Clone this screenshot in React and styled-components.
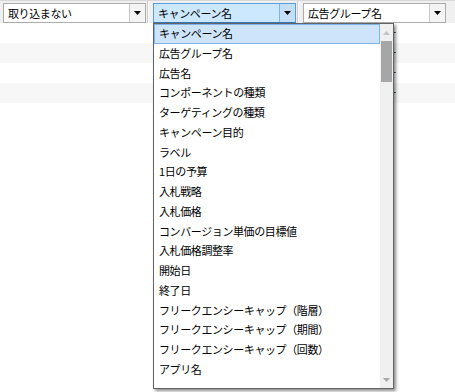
import React from 'react';
import styled, { createGlobalStyle } from 'styled-components';

const Global = createGlobalStyle`
  html, body { margin: 0; padding: 0; background: #fff; }
  body { font-family: "Noto Sans CJK JP", "Noto Sans", sans-serif; color: #000; }
`;

const Page = styled.div`
  position: relative;
  width: 455px;
  height: 392px;
  overflow: hidden;
  background: #fff;
`;

const Toolbar = styled.div`
  display: flex;
  align-items: flex-start;
  height: 23px;
  box-sizing: border-box;
  padding-left: 3px;
  background: #f0f0f0;
  border-top: 1px solid #d8d8d8;
`;

const Select = styled.div`
  display: flex;
  box-sizing: border-box;
  width: 143px;
  height: 20px;
  margin-top: 2px;
  border: 1px solid ${(p) => (p.$active ? '#5a9bd8' : '#acacac')};
  border-bottom-color: ${(p) => (p.$active ? '#3a78b8' : '#acacac')};
  background: ${(p) => (p.$active ? '#cce8ff' : '#fff')};
`;

const SelectText = styled.div`
  flex: 1;
  padding-left: 4px;
  font-size: 11px;
  letter-spacing: -0.4px;
  line-height: 18px;
  white-space: nowrap;
  overflow: hidden;
`;

const SelectButton = styled.div`
  width: 15px;
  display: flex;
  align-items: center;
  justify-content: center;
  border-left: 1px solid ${(p) => (p.$active ? '#7eb4ea' : '#c8c8c8')};
  background: ${(p) => (p.$active ? '#c4def5' : '#f4f4f4')};
`;

const Divider = styled.div`
  width: 7px;
  height: 22px;
  display: flex;
  padding-left: 1px;
  box-sizing: border-box;
  &::before {
    content: "";
    width: 1px;
    background: #cbcbcb;
  }
  &::after {
    content: "";
    width: 1px;
    background: #fbfbfb;
  }
`;

const Rows = styled.div`
  display: flex;
  flex-direction: column;
`;

const Row = styled.div`
  display: flex;
  height: 20px;
  background: ${(p) => (p.$alt ? '#f7f7f7' : '#fff')};
`;

const Peek = styled.div`
  margin-left: 388px;
  width: 9px;
  overflow: hidden;
  display: flex;
  justify-content: flex-end;
  font-size: 12px;
  line-height: 20px;
  & > span { flex: none; }
`;

const Dropdown = styled.div`
  position: absolute;
  left: 153px;
  top: 23px;
  width: 241px;
  height: 366px;
  box-sizing: border-box;
  border: 1px solid #646464;
  background: #fff;
  display: flex;
  box-shadow: 2px 2px 3px rgba(0, 0, 0, 0.45);
`;

const List = styled.div`
  flex: 1;
  display: flex;
  flex-direction: column;
  overflow: hidden;
`;

const Item = styled.div`
  flex: none;
  height: 19.75px;
  box-sizing: border-box;
  padding-left: 4px;
  border: 1px solid ${(p) => (p.$selected ? '#7eb4ea' : 'transparent')};
  background: ${(p) => (p.$selected ? '#cde4fa' : 'transparent')};
  font-size: 11px;
  letter-spacing: -0.4px;
  line-height: 16.5px;
  white-space: nowrap;
`;

const Scrollbar = styled.div`
  width: 13px;
  display: flex;
  flex-direction: column;
  background: #f0f0f0;
`;

const ScrollArrow = styled.div`
  height: 17px;
  display: flex;
  align-items: center;
  justify-content: center;
`;

const Thumb = styled.div`
  height: 41px;
  margin: 0 1px;
  background: #a6a6a6;
`;

const Spacer = styled.div`
  flex: 1;
`;

const Arrow = () => (
  <svg width="7" height="4" viewBox="0 0 7 4">
    <polygon points="0,0 7,0 3.5,4" fill="#000" />
  </svg>
);

const ScrollTri = ({ up, color }) => (
  <svg width="7" height="4" viewBox="0 0 7 4">
    <polygon points={up ? '0,4 7,4 3.5,0' : '0,0 7,0 3.5,4'} fill={color} />
  </svg>
);

const items = [
  'キャンペーン名',
  '広告グループ名',
  '広告名',
  'コンポーネントの種類',
  'ターゲティングの種類',
  'キャンペーン目的',
  'ラベル',
  '1日の予算',
  '入札戦略',
  '入札価格',
  'コンバージョン単価の目標値',
  '入札価格調整率',
  '開始日',
  '終了日',
  'フリークエンシーキャップ（階層）',
  'フリークエンシーキャップ（期間）',
  'フリークエンシーキャップ（回数）',
  'アプリ名',
];

const selects = [
  { label: '取り込まない' },
  { label: 'キャンペーン名', active: true },
  { label: '広告グループ名' },
];

export default function App() {
  return (
    <Page>
      <Global />
      <Toolbar>
        {selects.map((s, i) => (
          <React.Fragment key={s.label}>
            {i > 0 && <Divider />}
            <Select $active={s.active}>
              <SelectText>{s.label}</SelectText>
              <SelectButton $active={s.active}>
                <Arrow />
              </SelectButton>
            </Select>
          </React.Fragment>
        ))}
      </Toolbar>
      <Rows>
        {[0, 1, 2, 3].map((r) => (
          <Row key={r} $alt={r % 2 === 1}>
            <Peek>
              <span>そ</span>
            </Peek>
          </Row>
        ))}
      </Rows>
      <Dropdown>
        <List>
          {items.map((t, i) => (
            <Item key={t} $selected={i === 0}>
              {t}
            </Item>
          ))}
        </List>
        <Scrollbar>
          <ScrollArrow>
            <ScrollTri up color="#c4c4c4" />
          </ScrollArrow>
          <Thumb />
          <Spacer />
          <ScrollArrow>
            <ScrollTri color="#a8a8a8" />
          </ScrollArrow>
        </Scrollbar>
      </Dropdown>
    </Page>
  );
}
